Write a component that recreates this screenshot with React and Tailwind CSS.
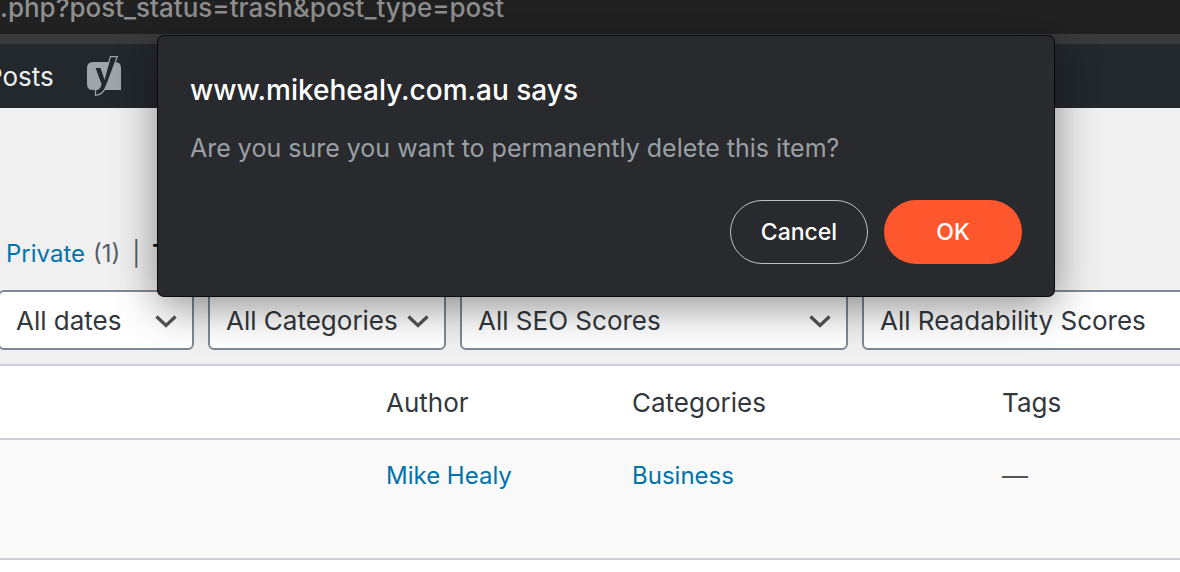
import React from "react";

function Chevron() {
  return (
    <svg
      aria-hidden="true"
      className="pointer-events-none absolute top-0 right-4 h-full w-6"
      viewBox="0 0 24 60"
      fill="none"
      stroke="#555"
      strokeWidth="3.200"
    >
      <path d="M2.500 26.500L12 35.500L21.500 26.500" />
    </svg>
  );
}

function Filter({ label, className }) {
  return (
    <div className={`relative shrink-0 ${className}`}>
      <select
        aria-label={label}
        className="h-15 w-full appearance-none rounded-md border-2 border-[#7e8993] bg-white pl-4 text-[26px] text-[#32373c]"
      >
        <option>{label}</option>
      </select>
      <Chevron />
    </div>
  );
}

function YoastIcon() {
  return (
    <svg className="h-10 w-9" viewBox="0 0 36 40" aria-hidden="true">
      <path
        fill="#a0a5aa"
        d="M7 6H29Q35 6 35 12V34H7Q1 34 1 28V12Q1 6 7 6Z"
      />
      <path
        fill="#23282d"
        stroke="#a0a5aa"
        strokeWidth="1.200"
        d="M24.300 .7H31.300L21 28.500Q17 39.400 9.500 39.400V34Q14 33.300 15 28.500L8.800 11.500H15L18.500 22Z"
      />
    </svg>
  );
}

function Dialog() {
  return (
    <div className="pointer-events-none absolute inset-x-0 top-9 flex justify-center pl-8">
      <div
        role="dialog"
        aria-labelledby="dialog-title"
        aria-describedby="dialog-text"
        className="pointer-events-auto w-full max-w-[896px] rounded-md bg-[#292a2d] p-8 shadow-[0_0_0_1px_#0a0a0a,0_10px_44px_rgba(0,0,0,0.45)]"
      >
        <h1 id="dialog-title" className="text-[28px] leading-11 font-medium text-white">
          www.mikehealy.com.au says
        </h1>
        <p id="dialog-text" className="mt-4 text-[25px] leading-10 text-[#9aa0a6]">
          Are you sure you want to permanently delete this item?
        </p>
        <div className="mt-8 flex justify-end gap-4">
          <button className="h-16 w-[138px] rounded-full border border-[#bdc1c6] text-[23px] font-medium text-white">
            Cancel
          </button>
          <button className="h-16 w-[138px] rounded-full bg-[#ff572d] text-[23px] font-medium text-white">
            OK
          </button>
        </div>
      </div>
    </div>
  );
}

export default function App() {
  return (
    <div className="relative min-h-screen overflow-hidden bg-[#f0f0f0] font-['Inter',sans-serif] text-[26px] text-[#32373c]">
      <div className="flex h-[34px] items-start bg-[#212121] font-medium text-[#8f8f8f]">
        <span className="-mt-3 leading-10">.php?post_status=trash&amp;post_type=post</span>
      </div>
      <div className="h-2.5 bg-[#3a3a3a]" />
      <header className="flex h-16 items-center bg-[#23282d] text-[#eee]">
        <a href="#posts" className="-ml-3.5">
          <span>Posts</span>
        </a>
        <a href="#seo" aria-label="SEO" className="ml-8">
          <YoastIcon />
        </a>
      </header>
      <main>
        <nav className="flex gap-2 pt-[126px] pl-1.5 text-2xl leading-10 text-[#555d66]">
          <a href="#private" className="text-[#0073aa]">Private</a>
          <span>(1)</span>
          <span className="mx-1">|</span>
          <a href="#trash" className="font-semibold text-black">Trash</a>
        </nav>
        <div className="-ml-0.5 flex gap-3.5 pt-4 pb-3.5">
          <Filter label="All dates" className="w-[196px]" />
          <Filter label="All Categories" className="w-[238px]" />
          <Filter label="All SEO Scores" className="w-[388px]" />
          <Filter label="All Readability Scores" className="w-[460px]" />
        </div>
        <table className="w-full table-fixed border-collapse bg-white text-left">
          <colgroup>
            <col className="w-[366px]" />
            <col className="w-[246px]" />
            <col className="w-[370px]" />
            <col />
          </colgroup>
          <thead>
            <tr className="h-[74px] border-y-2 border-[#ccd0d4]">
              <td />
              <th className="px-5 font-normal">Author</th>
              <th className="px-5 font-normal">Categories</th>
              <th className="px-5 font-normal">Tags</th>
            </tr>
          </thead>
          <tbody>
            <tr className="h-[120px] border-b-2 border-[#ccd0d4] bg-[#f9f9f9] align-top text-2xl leading-10 text-[#0073aa]">
              <td />
              <td className="px-5 pt-4"><a href="#author">Mike Healy</a></td>
              <td className="px-5 pt-4"><a href="#category">Business</a></td>
              <td className="px-5 pt-4 text-[26px] text-[#555]">—</td>
            </tr>
          </tbody>
        </table>
        <div className="h-3 bg-white" />
      </main>
      <Dialog />
    </div>
  );
}
